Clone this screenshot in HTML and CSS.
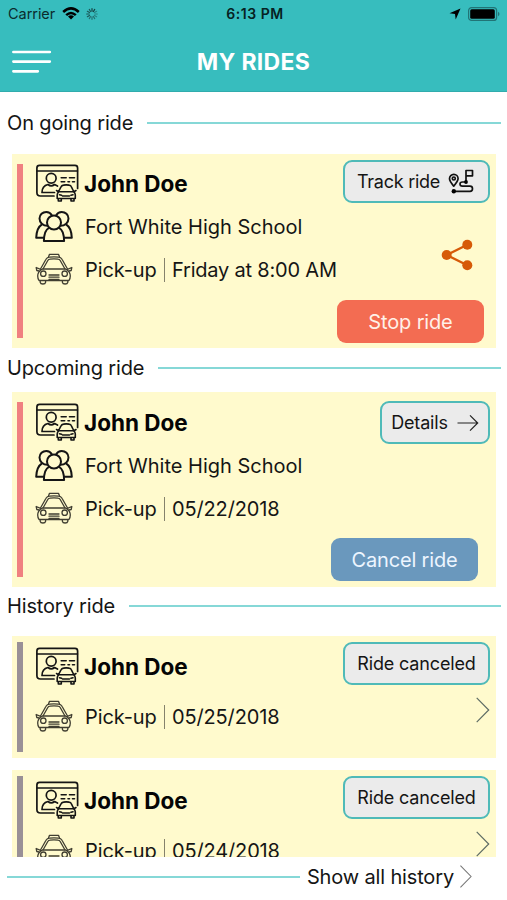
FILE: index.html
```
<!DOCTYPE html>
<html lang="en">
<head>
<meta charset="utf-8">
<title>My Rides</title>
<link rel="stylesheet" href="styles.css">
</head>
<body>
<svg class="sprite" aria-hidden="true">
  <symbol id="license" viewBox="0 0 44 40">
    <g fill="none" stroke="currentColor" stroke-width="1.7" stroke-linecap="round" stroke-linejoin="round">
      <path d="M19 33H5.500Q1.900 33 1.900 29.500V5Q1.900 2.400 4.500 2.400H40Q42.600 2.400 42.600 5V25.500"/>
      <path d="M2 8H42.500" stroke-width="1.5"/>
      <circle cx="16.200" cy="15.300" r="4.900"/>
      <path d="M19.500 29.500H7C7 25 8.500 22.500 13 21.500C15 23.200 17.500 23.200 19.500 21.500L22.500 23"/>
      <path d="M26.200 14.800h5M34.500 14.800h5M26.200 18.700h3.500M33 18.700h1.500M37.500 18.700h2" stroke-width="1.600"/>
      <path d="M23.600 28.500L26 23.800Q26.700 22.300 28.500 22.100Q31.300 21.700 34 22.100Q35.800 22.300 36.400 23.800L38.700 28.500M21.500 27.500L23.500 28.700M41 27.500L39 28.700" stroke-width="1.600"/>
      <path d="M24 28.700H38.500Q40.300 30 40.300 32V35.500H22.200V32Q22.200 30 24 28.700Z" stroke-width="1.600"/>
      <path d="M23.300 36v2h3v-2M36 36v2h3v-2M27.500 33h7M24.500 31.700l2 .5M38 31.700l-2 .5" stroke-width="1.600"/>
    </g>
  </symbol>
  <symbol id="people" viewBox="0 0 40 34">
    <g fill="none" stroke="currentColor" stroke-width="2" stroke-linejoin="round">
      <circle cx="19" cy="12.500" r="7"/>
      <path d="M12.500 15.800C8 15.800 4.500 12.500 4.500 8.600C4.500 4.800 7.600 1.900 11.300 1.900C13.600 1.900 15.700 3.100 16.900 5.200M21.100 5.200C22.300 3.100 24.400 1.900 26.700 1.900C30.400 1.900 33.500 4.800 33.500 8.600C33.500 12.500 30 15.800 25.500 15.800"/>
      <path d="M7 14.400C3.500 16.500 1.500 21 1.200 27.800H9.500M31 14.400C34.500 16.500 36.500 21 36.800 27.800H28.500"/>
      <path d="M14 17.800C10.500 19.500 9 24 8.900 31.100H29.100C29 24 27.500 19.500 24 17.800"/>
    </g>
  </symbol>
  <symbol id="taxi" viewBox="0 0 40 34">
    <g fill="none" stroke="currentColor" stroke-width="1.300" stroke-linejoin="round" stroke-linecap="round">
      <path d="M13.500 5L14.500 2.300H23.500L24.500 5"/>
      <path d="M5.500 17L11 7.200Q12 5.300 14.500 5.200Q19 4.700 23.500 5.200Q26 5.300 27 7.200L32.500 17M8 17L12.800 8.500Q13.500 7.200 15 7.100Q19 6.700 23 7.100Q24.500 7.200 25.200 8.500L30 17"/>
      <path d="M7.500 17H30.500M6.500 17.500Q2.700 20 2.700 24Q2.700 26.500 4 28.500H34Q35.300 26.500 35.300 24Q35.300 20 31.500 17.500"/>
      <path d="M5.500 17.300L1.200 15.500L1.800 18.500L4 19M32.500 17.300L36.800 15.500L36.200 18.500L34 19"/>
      <circle cx="8.300" cy="21.700" r="2.700"/><circle cx="29.700" cy="21.700" r="2.700"/>
      <path d="M5.200 28.800v1.500q.3 1.700 2.700 1.700t2.700-1.700v-1.500M27.400 28.800v1.500q.3 1.700 2.700 1.700t2.700-1.700v-1.500M14 23H24M14 25.200H24M14 27.400H24"/>
    </g>
  </symbol>
  <symbol id="chevron" viewBox="0 0 14 26">
    <path d="M.7 .8L12.700 13L.7 25.200" fill="none" stroke="currentColor" stroke-width="1.200"/>
  </symbol>
</svg>

<header class="header">
  <div class="status">
    <div class="status-left">
      <span class="carrier">Carrier</span>
      <svg class="wifi" viewBox="0 0 18 13"><g fill="none" stroke="#000" stroke-width="2.500"><path d="M1.200 5Q9-2.300 16.800 5"/><path d="M4.200 8.200Q9 3.800 13.800 8.200"/></g><path d="M6 9.500Q9 7.200 12 9.500L9 12.500Z"/></svg>
      <svg class="spinner" viewBox="0 0 12 12"><g stroke="#143f40" stroke-width="1.200" stroke-linecap="round"><path d="M6 .7V3.200M8.700 1.400L7.400 3.500"/><path d="M10.600 3.300L8.500 4.500M11.300 6H8.800M10.600 8.700L8.500 7.500" opacity=".45"/><path d="M8.700 10.600L7.400 8.500M6 11.300V8.800M3.300 10.600L4.600 8.500" opacity=".6"/><path d="M1.400 8.700L3.500 7.500M.7 6H3.200M1.400 3.300L3.500 4.500M3.300 1.400L4.600 3.500" opacity=".8"/></g></svg>
    </div>
    <span class="time">6:13 PM</span>
    <div class="status-right">
      <svg class="location" viewBox="0 0 12 12"><path d="M11.500.5L6.700 11.500L6 6L.5 5.300Z"/></svg>
      <svg class="battery" viewBox="0 0 32 14"><rect x=".6" y=".6" width="28" height="12.800" rx="3" fill="none" stroke="#217476" stroke-width="1.200"/><rect x="2.200" y="2.300" width="24.600" height="9.400" rx="1.500"/><path d="M30 4.800Q31.500 5.500 31.500 7T30 9.200Z" fill="#217476"/></svg>
    </div>
  </div>
  <div class="nav">
    <svg class="menu" viewBox="0 0 40 24"><path d="M1.400 2H37.800M1.400 11.600H37.800M1.400 21.300H25.800" stroke="#fff" stroke-width="2.700" stroke-linecap="round"/></svg>
    <h1>MY RIDES</h1>
  </div>
</header>

<main>
  <section>
    <h2 class="first">On going ride</h2>
    <article class="card">
      <div class="stripe"></div>
      <div class="info">
        <div class="row"><svg class="license"><use href="#license"/></svg><strong>John Doe</strong></div>
        <div class="row"><svg class="small"><use href="#people"/></svg><span class="school">Fort White High School</span></div>
        <div class="row"><svg class="small taxi"><use href="#taxi"/></svg><span class="pickup">Pick-up</span><i class="rule"></i><span class="day">Friday at 8:00 AM</span></div>
      </div>
      <div class="actions">
        <button class="pill"><span class="t-track">Track ride</span>
          <svg class="route" viewBox="0 0 26 26"><g fill="none" stroke="#111" stroke-width="1.700" stroke-linecap="round" stroke-linejoin="round"><path d="M5.700 17.200C3 13.700 1.500 11.700 1.500 9.700A4.300 4.300 0 0 1 10.100 9.700C10.100 11.700 8.500 13.700 5.700 17.200Z"/><circle cx="5.800" cy="9.500" r="1.500"/><path d="M18 12.800V1.500H24.500V6.800H18M17.500 13H14.500Q12 13 12 15T14.500 17.200H22Q24.500 17.200 24.500 19.700T22 22.300H6"/></g><circle cx="18" cy="13" r="1.900"/><circle cx="5.800" cy="22.300" r="2.200"/></svg>
        </button>
        <svg class="share" viewBox="0 0 32 32"><path d="M26.300 5.800L5.700 16L26.300 26.200" fill="none" stroke="#d65a08" stroke-width="2.300"/><g fill="#d65a08"><circle cx="26.300" cy="5.800" r="5"/><circle cx="5.700" cy="16" r="5"/><circle cx="26.300" cy="26.200" r="5"/></g></svg>
        <button class="solid stop"><span>Stop ride</span></button>
      </div>
    </article>
  </section>

  <section>
    <h2>Upcoming ride</h2>
    <article class="card">
      <div class="stripe"></div>
      <div class="info">
        <div class="row"><svg class="license"><use href="#license"/></svg><strong>John Doe</strong></div>
        <div class="row"><svg class="small"><use href="#people"/></svg><span class="school">Fort White High School</span></div>
        <div class="row"><svg class="small taxi"><use href="#taxi"/></svg><span class="pickup">Pick-up</span><i class="rule"></i><span class="date">05/22/2018</span></div>
      </div>
      <div class="actions">
        <button class="pill details"><span class="t-details">Details</span>
          <svg class="arrow" viewBox="0 0 22 18"><path d="M.5 9H20.500M13 1.300L20.700 9L13 16.700" fill="none" stroke="#222" stroke-width="1.200"/></svg>
        </button>
        <button class="solid cancel"><span>Cancel ride</span></button>
      </div>
    </article>
  </section>

  <section>
    <h2>History ride</h2>
    <div class="history">
      <article class="card past">
        <div class="stripe"></div>
        <div class="info">
          <div class="row"><svg class="license"><use href="#license"/></svg><strong>John Doe</strong></div>
          <div class="row"><svg class="small taxi"><use href="#taxi"/></svg><span class="pickup">Pick-up</span><i class="rule"></i><span class="date">05/25/2018</span></div>
        </div>
        <div class="actions">
          <button class="pill"><span class="t-canceled">Ride canceled</span></button>
          <svg class="chevron"><use href="#chevron"/></svg>
        </div>
      </article>
      <article class="card past">
        <div class="stripe"></div>
        <div class="info">
          <div class="row"><svg class="license"><use href="#license"/></svg><strong>John Doe</strong></div>
          <div class="row"><svg class="small taxi"><use href="#taxi"/></svg><span class="pickup">Pick-up</span><i class="rule"></i><span class="date">05/24/2018</span></div>
        </div>
        <div class="actions">
          <button class="pill"><span class="t-canceled">Ride canceled</span></button>
          <svg class="chevron"><use href="#chevron"/></svg>
        </div>
      </article>
    </div>
  </section>
</main>
<footer class="footer">
  <span class="show-all">Show all history</span>
  <svg class="chevron"><use href="#chevron"/></svg>
</footer>
</body>
</html>
```

FILE: styles.css
```
* { box-sizing: border-box; }
body {
  margin: 0;
  width: 507px;
  height: 900px;
  overflow: hidden;
  background: #fff;
  color: #151515;
  font-family: Inter, "Liberation Sans", sans-serif;
  font-size: 20px;
}
svg { display: block; flex: none; }
span, strong { white-space: nowrap; }
.sprite { position: absolute; width: 0; height: 0; }

.header {
  height: 92px;
  background: #37bdbe;
  border-bottom: 1px solid #31acad;
}
.status {
  height: 27px;
  display: grid;
  grid-template-columns: 1fr auto 1fr;
  align-items: center;
  padding: 0 7px 0 8px;
  font-size: 14px;
  color: #0b2c2d;
}
.status-left, .status-right { display: flex; align-items: center; }
.status-right { justify-content: flex-end; gap: 7px; }
.carrier { font-size: 14.500px; letter-spacing: -.05px; }
.wifi { width: 18px; height: 13px; margin-left: 7px; }
.spinner { width: 12px; height: 12px; margin-left: 6px; }
.time { font-weight: 600; color: #062223; letter-spacing: .55px; margin-left: 2px; }
.location { width: 12px; height: 12px; }
.battery { width: 32px; height: 14px; }
.nav {
  height: 64px;
  display: grid;
  grid-template-columns: 1fr auto 1fr;
  align-items: center;
  padding: 6px 12px 0 12px;
}
.menu { width: 40px; height: 24px; }
h1 {
  margin: 0 0 1px;
  font-size: 23px;
  line-height: 28px;
  font-weight: 700;
  letter-spacing: .3px;
  color: #fff;
}

h2 {
  display: flex;
  align-items: center;
  gap: 14px;
  height: 44px;
  margin: 0;
  padding: 0 6px 5px 7px;
  font-size: 20px;
  font-weight: 400;
  letter-spacing: -.15px;
}
h2::after, .footer::before {
  content: "";
  flex: 1;
  height: 2px;
  background: #86d8d7;
}
h2.first { height: 62px; padding-bottom: 0; }
section:first-child .card { height: 194px; }
section:nth-child(3) h2 { height: 49px; padding-bottom: 11px; }

.card {
  display: flex;
  height: 195px;
  margin: 0 11px 0 12px;
  padding: 10px 6px 10px 5px;
  background: #fffacd;
}
.stripe { width: 6px; background: #f08080; }
.info { margin-left: 12px; margin-top: -2px; width: 290px; }
section:nth-child(2) .info { margin-top: -1px; }
.row { display: flex; align-items: center; height: 43px; }
.license { width: 44px; height: 40px; margin: -1px 5px 0 0; }
.small { width: 40px; height: 34px; margin-right: 10px; }
.taxi { color: #403e31; margin-top: -1px; }
.pickup { width: 71px; letter-spacing: -.1px; }
.day { letter-spacing: -.2px; }
.date { letter-spacing: -.15px; }
.rule { flex: none; width: 1px; height: 24px; background: #85826c; margin: 0 7px 0 8px; }
strong { font-size: 22.500px; font-weight: 700; color: #050505; }

.actions {
  flex: 1;
  display: flex;
  flex-direction: column;
  align-items: flex-end;
  margin-top: -4px;
  min-width: 0;
}
button {
  flex: none;
  display: flex;
  align-items: center;
  justify-content: center;
  margin: 0;
  padding: 0;
  width: 147px;
  height: 43px;
  border-radius: 9px;
  font-family: inherit;
}
.pill {
  gap: 8px;
  background: #ebebeb;
  border: 2px solid #4fbab8;
  color: #151515;
  font-size: 18px;
}
.t-track { letter-spacing: -.25px; }
.t-canceled { letter-spacing: -.15px; }
.details { width: 110px; margin-top: 3px; gap: 9px; }
.t-details { letter-spacing: -.15px; }
.route { width: 26px; height: 26px; margin-right: 2px; }
.arrow { width: 22px; height: 18px; }
.share { width: 32px; height: 32px; margin: 36px 17px 0 0; }
.solid { border: 0; color: #fff1e9; font-size: 20px; letter-spacing: -.15px; margin-top: auto; }
.stop { background: #f36c52; margin-right: 6px; margin-bottom: -5px; }
.cancel { background: #6a98bd; color: #edf5ff; margin-right: 12px; margin-bottom: -4px; }

.history { height: 221px; overflow: hidden; }
.past, section:nth-child(3) .card { height: 122px; margin-bottom: 12px; padding: 6px 6px 6px 5px; }
.past .stripe { background: #999096; }
.past .info { margin-top: 3px; }
.past .row + .row { margin-top: 7px; }
.past .actions { margin-top: 0; }
.past .pill { gap: 0; }
.chevron { width: 14px; height: 26px; color: #5d6b64; }
.past .chevron { margin-top: 12px; }
.footer {
  display: flex;
  align-items: center;
  height: 43px;
  padding: 0 34px 4px 7px;
}
.show-all { letter-spacing: -.15px; }
.footer::before { margin-right: 7px; }
.footer .chevron { width: 14px; height: 23px; margin-left: 5px; color: #777; }
```
